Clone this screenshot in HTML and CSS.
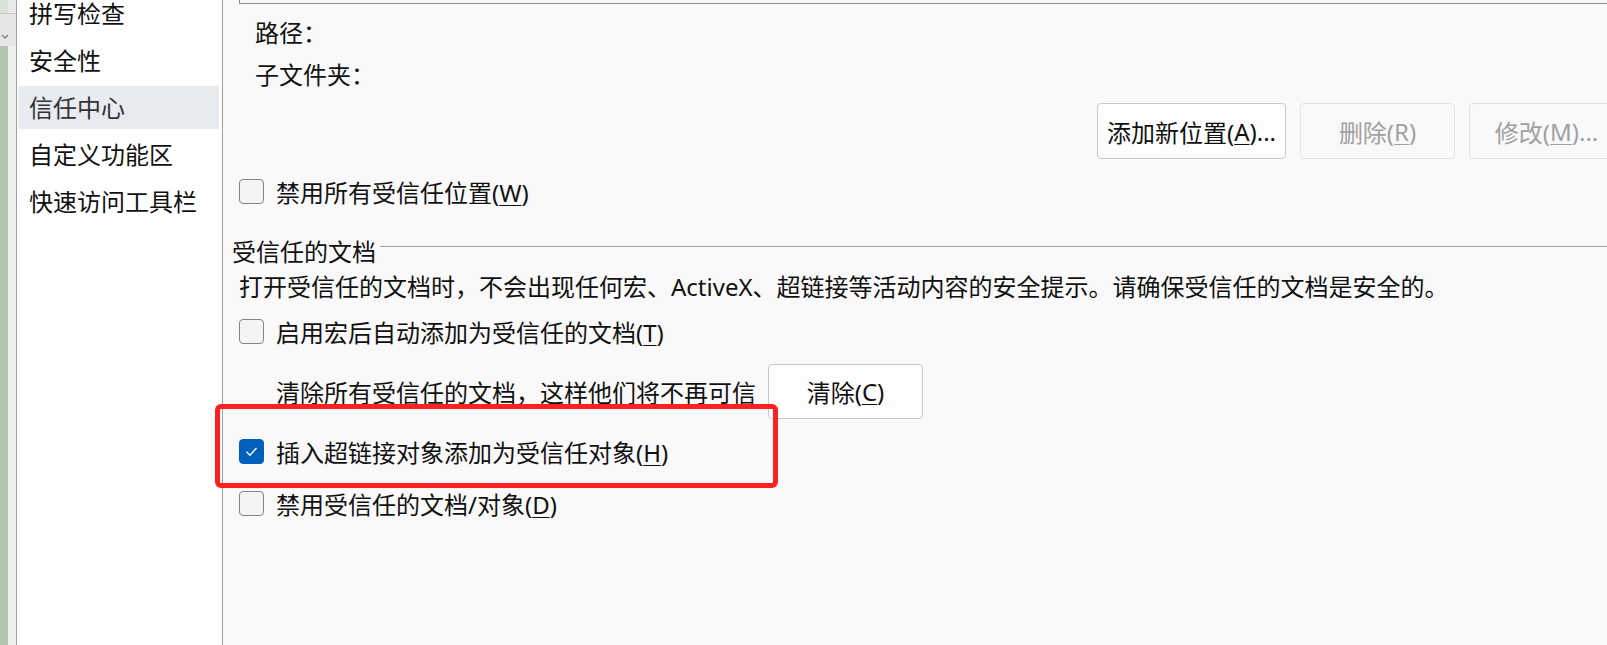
FILE: index.html
```
<html>
<head>
  <link rel="stylesheet" href="styles.css">
</head>
<body>
  <div class="edge">
    <div class="edge-top"></div>
    <div class="edge-drop">
      <svg width="16" height="33" viewBox="0 0 16 33"><polyline points="2,21 5,24 8,21" fill="none" stroke="#777" stroke-width="1.2"/></svg>
    </div>
    <div class="edge-rest"></div>
  </div>

  <div class="sidebar">
    <div class="nav-item">拼写检查</div>
    <div class="nav-item">安全性</div>
    <div class="nav-item selected">信任中心</div>
    <div class="nav-item">自定义功能区</div>
    <div class="nav-item">快速访问工具栏</div>
  </div>

  <div class="content">
    <div class="location-list"></div>
    <div class="field">路径：</div>
    <div class="field">子文件夹：</div>

    <div class="button-row">
      <div class="btn">添加新位置(<u>A</u>)...</div>
      <div class="btn disabled">删除(<u>R</u>)</div>
      <div class="btn disabled">修改(<u>M</u>)...</div>
    </div>

    <div class="check-row row-w">
      <span class="checkbox"></span>
      <span>禁用所有受信任位置(<u>W</u>)</span>
    </div>

    <div class="group-title">
      <span>受信任的文档</span>
      <span class="group-line"></span>
    </div>
    <div class="description">打开受信任的文档时，不会出现任何宏、ActiveX、超链接等活动内容的安全提示。请确保受信任的文档是安全的。</div>

    <div class="check-row row-t">
      <span class="checkbox"></span>
      <span>启用宏后自动添加为受信任的文档(<u>T</u>)</span>
    </div>

    <div class="clear-row">
      <span>清除所有受信任的文档，这样他们将不再可信</span>
      <div class="btn clear-btn">清除(<u>C</u>)</div>
    </div>

    <div class="check-row row-h">
      <span class="checkbox checked">
        <svg width="25" height="25" viewBox="0 0 25 25"><polyline points="7.5,12.8 11,16.2 17.5,9" fill="none" stroke="#fff" stroke-width="1.4"/></svg>
      </span>
      <span>插入超链接对象添加为受信任对象(<u>H</u>)</span>
    </div>

    <div class="check-row row-d">
      <span class="checkbox"></span>
      <span>禁用受信任的文档/对象(<u>D</u>)</span>
    </div>

    <!-- annotation box drawn over the option -->
    <div class="highlight"></div>
  </div>
</body>
</html>
```

FILE: styles.css
```
body {
  margin: 0;
  height: 645px;
  display: flex;
  overflow: hidden;
  background-color: #f9f9f9;
  font-family: "Noto Sans", "Noto Sans CJK SC", sans-serif;
  font-size: 24px;
  color: #111;
}
u {
  text-decoration-thickness: 1px;
  text-underline-offset: 3px;
}

/* window edge on the far left */
.edge {
  width: 16px;
  flex-shrink: 0;
  display: flex;
  flex-direction: column;
}
.edge-top {
  height: 13px;
  background: linear-gradient(to right, #d9e3d5 8px, #e9ebe8 8px);
  border-bottom: 1px solid #c8c8c8;
}
.edge-drop {
  height: 32px;
  background-color: #e6e6e6;
}
.edge-drop svg {
  display: block;
}
.edge-rest {
  flex: 1;
  background: linear-gradient(to right, #afc5a9 8px, #f0f0f0 8px);
}

/* category list */
.sidebar {
  width: 207px;
  flex-shrink: 0;
  box-sizing: border-box;
  background-color: #fff;
  border-left: 1px solid #a0a0a0;
  border-right: 1px solid #a0a0a0;
  padding-top: 1px;
}
.nav-item {
  height: 43px;
  line-height: 43px;
  margin: 0 3px 4px 1px;
  padding-left: 11px;
  color: #111;
  white-space: nowrap;
}
.nav-item:first-child {
  margin-top: -9px;
}
.selected {
  background-color: #e8ebef;
  color: #333;
}

/* right pane */
.content {
  flex: 1;
  min-width: 0;
  position: relative;
  padding-left: 16px;
}
.location-list {
  height: 3px;
  border-left: 1px solid #8a8a8a;
  border-bottom: 1px solid #8a8a8a;
}
.field {
  height: 42px;
  line-height: 42px;
  padding-left: 16px;
}
.field:nth-of-type(2) {
  margin-top: 8px;
}
.button-row {
  display: flex;
  gap: 14px;
  margin-top: 7px;
  padding-left: 858px;
}
.btn {
  height: 56px;
  box-sizing: border-box;
  min-width: 155px;
  padding: 0 9px;
  display: flex;
  align-items: center;
  justify-content: center;
  flex-shrink: 0;
  background-color: #fdfdfd;
  border: 1px solid #c9c9c9;
  border-radius: 4px;
  white-space: nowrap;
}
.disabled {
  background-color: #f9f9f9;
  border-color: #e3e3e3;
  color: #a0a0a0;
}

.check-row {
  height: 40px;
  display: flex;
  align-items: center;
  gap: 12px;
}
.checkbox {
  width: 25px;
  height: 25px;
  box-sizing: border-box;
  border: 1px solid #858585;
  border-radius: 4px;
  background-color: #f4f4f4;
  flex-shrink: 0;
}
.checked {
  background-color: #005fb8;
  border-color: #005fb8;
}
.checked svg {
  display: block;
  margin: -1px;
}
.row-w {
  margin-top: 12px;
}
.row-t {
  margin-top: 7px;
}
.row-h {
  margin-top: 12px;
}
.row-d {
  margin-top: 12px;
}

.group-title {
  height: 40px;
  margin-top: 19px;
  margin-left: -7px;
  display: flex;
  align-items: center;
  gap: 4px;
}
.group-line {
  flex: 1;
  height: 0;
  border-top: 1px solid #a0a0a0;
  margin-top: -7px;
}
.description {
  height: 34px;
  line-height: 34px;
  white-space: nowrap;
}

.clear-row {
  display: flex;
  align-items: center;
  gap: 12px;
  margin-top: 13px;
  padding-left: 37px;
}
.clear-btn {
  height: 55px;
  width: 155px;
}

.highlight {
  position: absolute;
  left: -8px;
  top: 404px;
  width: 563px;
  height: 84px;
  box-sizing: border-box;
  border: 5px solid #ff2121;
  border-radius: 6px;
}
```
